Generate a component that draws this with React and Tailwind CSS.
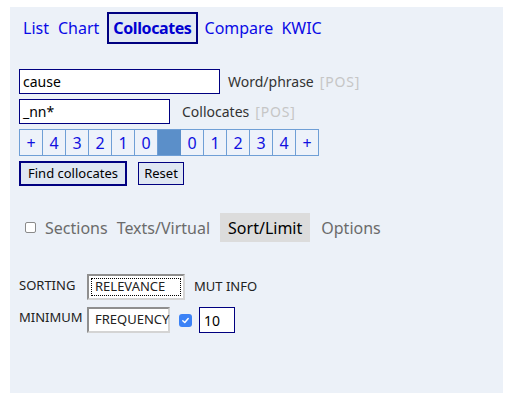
import React from "react";

const font = { fontFamily: '"Noto Sans", "Open Sans", sans-serif' };

export default function App() {
  const cells = ["+", "4", "3", "2", "1", "0", "", "0", "1", "2", "3", "4", "+"];
  return (
    <div className="w-[510px] h-[403px] bg-white pt-[7px] pl-[10px]" style={font}>
      <div className="w-[493px] h-[386px] bg-[#ecf1f8] pl-[9px] flex flex-col">
        {/* nav */}
        <div className="flex items-center h-[32px] mt-[5px] text-[16px] text-[#0a0ae6]">
          <span className="ml-[4px]">List</span>
          <span className="ml-[9px]">Chart</span>
          <span className="ml-[8px] h-[32px] px-[4px] border-2 border-[#000080] bg-[#e2e9f3] font-bold text-[#0000d0] tracking-[-0.4px] flex items-center">Collocates</span>
          <span className="ml-[7px]">Compare</span>
          <span className="ml-[8px]">KWIC</span>
        </div>

        {/* inputs */}
        <div className="mt-[25px] flex items-center h-[25px]">
          <div className="w-[201px] h-[25px] border border-[#000080] bg-white text-[14px] text-black px-[3px] flex items-center">cause</div>
          <span className="ml-[8px] text-[14px] text-[#333]">Word/phrase</span>
          <span className="ml-[6px] text-[14px] tracking-[0.8px] text-[#c6c6c6]">[POS]</span>
        </div>
        <div className="mt-[5px] flex items-center h-[25px]">
          <div className="w-[151px] h-[25px] border border-[#000080] bg-white text-[14px] text-black px-[3px] flex items-center">_nn*</div>
          <span className="ml-[12px] text-[14px] text-[#333]">Collocates</span>
          <span className="ml-[6px] text-[14px] tracking-[0.8px] text-[#c6c6c6]">[POS]</span>
        </div>

        {/* position grid */}
        <div className="mt-[5px] flex h-[27px] w-[301px] border-l border-[#6f9fd6]">
          {cells.map((c, i) => (
            <div
              key={i}
              className={
                "w-[23px] h-[27px] border-y border-r border-[#6f9fd6] flex items-center justify-center text-[16px] text-[#1010e0] " +
                (i === 6 ? "bg-[#5b8fc9] border-r-[#5b8fc9]" : "bg-[#edf2fa]")
              }
            >
              {c}
            </div>
          ))}
        </div>

        {/* buttons */}
        <div className="mt-[5px] flex items-start">
          <div className="w-[108px] h-[25px] border-2 border-[#000080] bg-[#dfe7f2] text-[13px] text-black flex items-center justify-center">Find collocates</div>
          <div className="ml-[11px] mt-[1px] w-[46px] h-[23px] border border-[#000080] bg-[#dfe7f2] text-[13px] text-black flex items-center justify-center">Reset</div>
        </div>

        {/* tabs */}
        <div className="mt-[27px] flex items-center h-[29px] text-[16px] text-[#6b6b6b]">
          <span className="ml-[6px] w-[11px] h-[11px] border border-[#8a8a8a] rounded-[2px] bg-white"></span>
          <span className="ml-[9px]">Sections</span>
          <span className="ml-[9px]">Texts/Virtual</span>
          <span className="ml-[10px] h-[29px] px-[8px] bg-[#dcdcdc] text-black flex items-center">Sort/Limit</span>
          <span className="ml-[11px]">Options</span>
        </div>

        {/* sorting */}
        <div className="mt-[32px] flex items-center h-[26px] text-[13px] text-[#222]">
          <span className="w-[68px] mb-[2px]">SORTING</span>
          <div className="w-[98px] h-[26px] border-2 border-t-[#8f8f8f] border-l-[#8f8f8f] border-b-[#d4d4d4] border-r-[#d4d4d4] bg-white p-[2px]">
            <div className="w-full h-full border border-dotted border-black flex items-center pl-[3px]">RELEVANCE</div>
          </div>
          <span className="ml-[9px]">MUT INFO</span>
        </div>
        <div className="mt-[7px] flex items-center h-[26px] text-[13px] text-[#222]">
          <span className="w-[68px] mb-[4px]">MINIMUM</span>
          <div className="w-[83px] h-[26px] border-2 border-t-[#8f8f8f] border-l-[#8f8f8f] border-b-[#d4d4d4] border-r-[#d4d4d4] bg-white flex items-center pl-[6px]">FREQUENCY</div>
          <span className="ml-[9px] w-[13px] h-[13px] rounded-[3px] bg-[#3b82f6] flex items-center justify-center">
            <svg width="9" height="9" viewBox="0 0 10 10"><path d="M2 5.2 L4.2 7.3 L8 2.8" fill="none" stroke="white" strokeWidth="1.6" strokeLinecap="round" strokeLinejoin="round" /></svg>
          </span>
          <div className="ml-[7px] w-[36px] h-[26px] border border-[#000080] bg-white flex items-center pl-[4px] text-[14px] text-black">10</div>
        </div>
      </div>
    </div>
  );
}
